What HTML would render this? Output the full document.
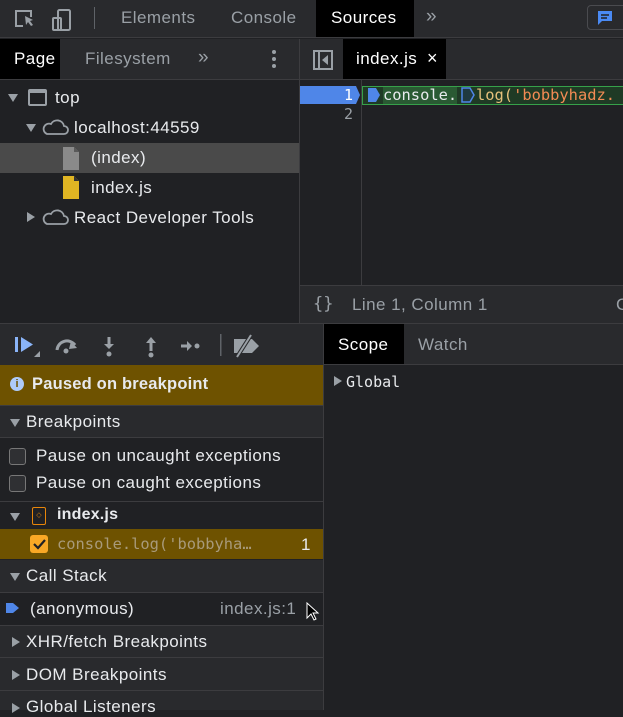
<!DOCTYPE html>
<html><head><style>
*{box-sizing:border-box;margin:0;padding:0}
body{width:623px;height:710px;overflow:hidden;background:#202124;font-family:"Liberation Sans",sans-serif;color:#e8eaed;font-size:17px;letter-spacing:0.45px;position:relative}
.a{position:absolute}
.mono{font-family:"DejaVu Sans Mono","Liberation Mono",monospace;letter-spacing:0}
.gray{color:#9aa0a6}
.hd{background:#292a2d}
.tri{display:inline-block;width:0;height:0;border-left:5px solid transparent;border-right:5px solid transparent;border-top:8px solid #9aa0a6}
.trir{display:inline-block;width:0;height:0;border-top:5px solid transparent;border-bottom:5px solid transparent;border-left:8px solid #9aa0a6}
.cb{width:17px;height:17px;border:1.5px solid #777;border-radius:3px;background:#2f3033}
</style></head><body>
<!-- top bar -->
<div class="a hd" style="left:0;top:0;width:623px;height:38px;border-bottom:1px solid #3c3c3f"></div>
<svg class="a" style="left:12px;top:6px" width="70" height="26" viewBox="0 0 70 26" fill="none" stroke="#9aa0a6" stroke-width="2"><path d="M11 20H4V5h15v6"/><path d="M13 10l8 4-3 1 3 4-2 1-3-4-2 3z" fill="#9aa0a6" stroke="none"/><rect x="46" y="4" width="12" height="20" rx="1.5"/><rect x="41" y="12" width="8" height="12" rx="1"/></svg>
<div class="a" style="left:94px;top:7px;width:1px;height:22px;background:#5f6368"></div>
<div class="a gray" style="left:121px;top:8px">Elements</div>
<div class="a gray" style="left:231px;top:8px">Console</div>
<div class="a" style="left:316px;top:0;width:98px;height:37px;background:#000"></div>
<div class="a" style="left:331px;top:8px;color:#fff">Sources</div>
<div class="a gray" style="left:426px;top:6px;font-size:19px">»</div>
<div class="a" style="left:587px;top:5px;width:50px;height:25px;border:1px solid #4a4b4f;border-radius:4px"></div>
<svg class="a" style="left:597px;top:10px" width="16" height="16"><path d="M1 1h14v10H5l-4 4z" fill="#4a8af4"/><path d="M4 5h8M4 8h6" stroke="#202124" stroke-width="1.5"/></svg>
<!-- left sub tabs -->
<div class="a hd" style="left:0;top:39px;width:299px;height:41px;border-bottom:1px solid #3c3c3f"></div>
<div class="a" style="left:0;top:39px;width:60px;height:40px;background:#000"></div>
<div class="a" style="left:14px;top:49px;color:#fff">Page</div>
<div class="a gray" style="left:85px;top:49px">Filesystem</div>
<div class="a gray" style="left:198px;top:47px;font-size:19px">»</div>
<div class="a" style="left:272px;top:50px;width:4px;height:4px;background:#9aa0a6;border-radius:2px;box-shadow:0 7px #9aa0a6,0 14px #9aa0a6"></div>
<div class="a" style="left:299px;top:39px;width:1px;height:285px;background:#3c3c3f"></div>
<!-- tree -->
<div class="a" style="left:0;top:143px;width:299px;height:30px;background:#4a4a4a"></div>
<span class="a tri" style="left:8px;top:94px"></span>
<div class="a" style="left:28px;top:89px;width:19px;height:17px;border:2px solid #9aa0a6;border-top-width:4px;border-radius:2px"></div>
<div class="a" style="left:55px;top:88px">top</div>
<span class="a tri" style="left:26px;top:124px"></span>
<svg class="a" style="left:40px;top:117px" width="30" height="20"><path d="M7 17h17a4 4 0 0 0 0-8 7 7 0 0 0-13-2 5 5 0 0 0-4 10z" fill="none" stroke="#9aa0a6" stroke-width="1.8"/></svg>
<div class="a" style="left:74px;top:118px">localhost:44559</div>
<svg class="a" style="left:63px;top:147px" width="16" height="23"><path d="M0 0h11l5 5v18H0z" fill="#8a8a8a"/><path d="M11 0v5h5" fill="#5a5a5a"/></svg>
<div class="a" style="left:91px;top:148px">(index)</div>
<svg class="a" style="left:63px;top:176px" width="16" height="23"><path d="M0 0h11l5 5v18H0z" fill="#e0b523"/><path d="M11 0v5h5z" fill="#333"/></svg>
<div class="a" style="left:91px;top:178px">index.js</div>
<span class="a trir" style="left:27px;top:212px"></span>
<svg class="a" style="left:40px;top:207px" width="30" height="20"><path d="M7 17h17a4 4 0 0 0 0-8 7 7 0 0 0-13-2 5 5 0 0 0-4 10z" fill="none" stroke="#9aa0a6" stroke-width="1.8"/></svg>
<div class="a" style="left:74px;top:208px">React Developer Tools</div>
<!-- editor -->
<div class="a hd" style="left:300px;top:39px;width:323px;height:41px;border-bottom:1px solid #3c3c3f"></div>
<div class="a" style="left:313px;top:50px;width:20px;height:20px;border:2px solid #9aa0a6"></div>
<div class="a" style="left:318px;top:50px;width:2px;height:20px;background:#9aa0a6"></div>
<div class="a" style="left:322px;top:55px;border-top:5px solid transparent;border-bottom:5px solid transparent;border-right:6px solid #9aa0a6"></div>
<div class="a" style="left:343px;top:39px;width:103px;height:40px;background:#000"></div>
<div class="a" style="left:356px;top:49px;color:#fff">index.js</div>
<div class="a" style="left:427px;top:48px;color:#fff;font-size:18px">×</div>
<div class="a" style="left:361px;top:80px;width:1px;height:205px;background:#3c3c3f"></div>
<div class="a" style="left:300px;top:86px;width:60px;height:18px;background:#4f86e8;clip-path:polygon(0 0,56px 0,60px 9px,56px 18px,0 18px)"></div>
<div class="a mono" style="left:344px;top:86px;color:#fff;font-size:15px">1</div>
<div class="a mono gray" style="left:344px;top:105px;font-size:15px">2</div>
<div class="a" style="left:362px;top:86px;width:261px;height:19px;background:#1f3a25;border:1px solid #36a14a;border-right:none"></div>
<div class="a" style="left:383px;top:87px;width:74px;height:17px;background:#2a5a33"></div>
<div class="a" style="left:368px;top:88px;width:12px;height:14px;background:#4f86e8;clip-path:polygon(0 0,8px 0,12px 7px,8px 14px,0 14px)"></div>
<svg class="a" style="left:461px;top:87px" width="14" height="16"><path d="M1 1h8l4 7-4 7H1z" fill="#1f3a40" stroke="#4f86e8" stroke-width="1.5"/></svg>
<div class="a mono" style="left:383px;top:86px;font-size:15.4px;white-space:nowrap;color:#e8eaed">console.</div>
<div class="a mono" style="left:476px;top:86px;font-size:15.4px;white-space:nowrap"><span style="color:#e5c07b">log(</span><span style="color:#f28b54">'bobbyhadz.</span></div>
<!-- status -->
<div class="a hd" style="left:300px;top:285px;width:323px;height:39px;border-top:1px solid #3c3c3f"></div>
<div class="a mono gray" style="left:313px;top:294px;font-size:17px">{}</div>
<div class="a gray" style="left:352px;top:295px">Line 1, Column 1</div>
<div class="a gray" style="left:616px;top:295px">C</div>
<div class="a" style="left:0;top:323px;width:623px;height:1px;background:#3c3c3f"></div>
<!-- debug toolbar -->
<div class="a hd" style="left:0;top:324px;width:323px;height:41px"></div>
<svg class="a" style="left:12px;top:333px" width="260" height="28">
<rect x="3" y="4" width="3" height="15" fill="#8ab4f8"/><path d="M9 4l12 7.5L9 19z" fill="#8ab4f8"/><path d="M22 24h6v-6z" fill="#9aa0a6"/>
<path d="M45 17a10 10 0 0 1 18-5" fill="none" stroke="#9aa0a6" stroke-width="3"/><path d="M59 8l6 7-8 1z" fill="#9aa0a6"/><circle cx="54" cy="18" r="2.5" fill="#9aa0a6"/>
<path d="M97 4v9" stroke="#9aa0a6" stroke-width="3"/><path d="M92 11h10l-5 5z" fill="#9aa0a6"/><circle cx="97" cy="21" r="2.5" fill="#9aa0a6"/>
<path d="M139 9v9" stroke="#9aa0a6" stroke-width="3"/><path d="M134 10h10l-5-6z" fill="#9aa0a6"/><circle cx="139" cy="22" r="2.5" fill="#9aa0a6"/>
<path d="M169 13h7" stroke="#9aa0a6" stroke-width="3"/><path d="M175 8l5 5-5 5z" fill="#9aa0a6"/><circle cx="185" cy="13" r="2.5" fill="#9aa0a6"/>
<rect x="208" y="1" width="1.5" height="22" fill="#5f6368"/>
<path d="M222 6h18l7 7-7 7h-18z" fill="#9aa0a6"/><path d="M225 24l14-22" stroke="#292a2d" stroke-width="4"/><path d="M225 24l14-22" stroke="#9aa0a6" stroke-width="2"/>
</svg>
<div class="a" style="left:323px;top:324px;width:1px;height:386px;background:#3c3c3f"></div>
<div class="a hd" style="left:324px;top:324px;width:299px;height:41px;border-bottom:1px solid #3c3c3f"></div>
<div class="a" style="left:324px;top:324px;width:80px;height:40px;background:#000"></div>
<div class="a" style="left:338px;top:335px;color:#fff">Scope</div>
<div class="a gray" style="left:418px;top:335px">Watch</div>
<span class="a trir" style="left:334px;top:376px"></span>
<div class="a mono" style="left:346px;top:373px;font-size:15px">Global</div>
<!-- paused -->
<div class="a" style="left:0;top:365px;width:323px;height:40px;background:#6e5200"></div>
<div class="a" style="left:10px;top:377px;width:14px;height:14px;border-radius:7px;background:#aecbfa;color:#6e5200;font-size:11px;font-weight:bold;text-align:center;line-height:14px;letter-spacing:0">i</div>
<div class="a" style="left:32px;top:375px;font-weight:bold;font-size:16.5px;letter-spacing:0.2px;color:#e8eaed">Paused on breakpoint</div>
<div class="a hd" style="left:0;top:405px;width:323px;height:33px;border-top:1px solid #3c3c3f;border-bottom:1px solid #3c3c3f"></div>
<span class="a tri" style="left:10px;top:419px"></span>
<div class="a" style="left:26px;top:412px">Breakpoints</div>
<div class="a cb" style="left:9px;top:448px"></div>
<div class="a" style="left:36px;top:446px">Pause on uncaught exceptions</div>
<div class="a cb" style="left:9px;top:475px"></div>
<div class="a" style="left:36px;top:473px">Pause on caught exceptions</div>
<div class="a" style="left:0;top:501px;width:323px;height:1px;background:#3c3c3f"></div>
<span class="a tri" style="left:10px;top:513px"></span>
<div class="a" style="left:32px;top:507px;width:14px;height:18px;border:1.5px solid #e8860a;border-radius:2px;color:#e8860a;font-size:7px;text-align:center;line-height:15px;letter-spacing:0">◇</div>
<div class="a" style="left:57px;top:506px;font-weight:bold;font-size:16px;letter-spacing:0.2px">index.js</div>
<div class="a" style="left:0;top:529px;width:323px;height:30px;background:#6e5200"></div>
<div class="a" style="left:30px;top:535px;width:18px;height:18px;background:#f9a825;border-radius:3px"></div>
<svg class="a" style="left:31px;top:536px" width="16" height="16"><path d="M3 8l4 4 7-8" fill="none" stroke="#202124" stroke-width="2.2"/></svg>
<div class="a mono" style="left:57px;top:535px;font-size:15.4px;color:#a89a7a">console.log('bobbyha…</div>
<div class="a" style="left:301px;top:535px">1</div>
<div class="a hd" style="left:0;top:560px;width:323px;height:33px;border-bottom:1px solid #3c3c3f"></div>
<span class="a tri" style="left:10px;top:573px"></span>
<div class="a" style="left:26px;top:566px">Call Stack</div>
<svg class="a" style="left:6px;top:601px" width="14" height="14"><path d="M0 2h7l6 5-6 5H0z" fill="#4f86e8"/></svg>
<div class="a" style="left:30px;top:599px">(anonymous)</div>
<div class="a gray" style="left:220px;top:599px">index.js:1</div>
<svg class="a" style="left:306px;top:602px" width="14" height="20"><path d="M1 1v15l4-4 3 6 2-1-3-6h5z" fill="#000" stroke="#fff" stroke-width="1"/></svg>
<div class="a hd" style="left:0;top:625px;width:323px;height:33px;border-top:1px solid #3c3c3f;border-bottom:1px solid #3c3c3f"></div>
<span class="a trir" style="left:12px;top:637px"></span>
<div class="a" style="left:26px;top:632px">XHR/fetch Breakpoints</div>
<div class="a hd" style="left:0;top:658px;width:323px;height:33px;border-bottom:1px solid #3c3c3f"></div>
<span class="a trir" style="left:12px;top:670px"></span>
<div class="a" style="left:26px;top:665px">DOM Breakpoints</div>
<div class="a hd" style="left:0;top:691px;width:323px;height:19px"></div>
<span class="a trir" style="left:12px;top:703px"></span>
<div class="a" style="left:26px;top:697px">Global Listeners</div>
</body></html>
